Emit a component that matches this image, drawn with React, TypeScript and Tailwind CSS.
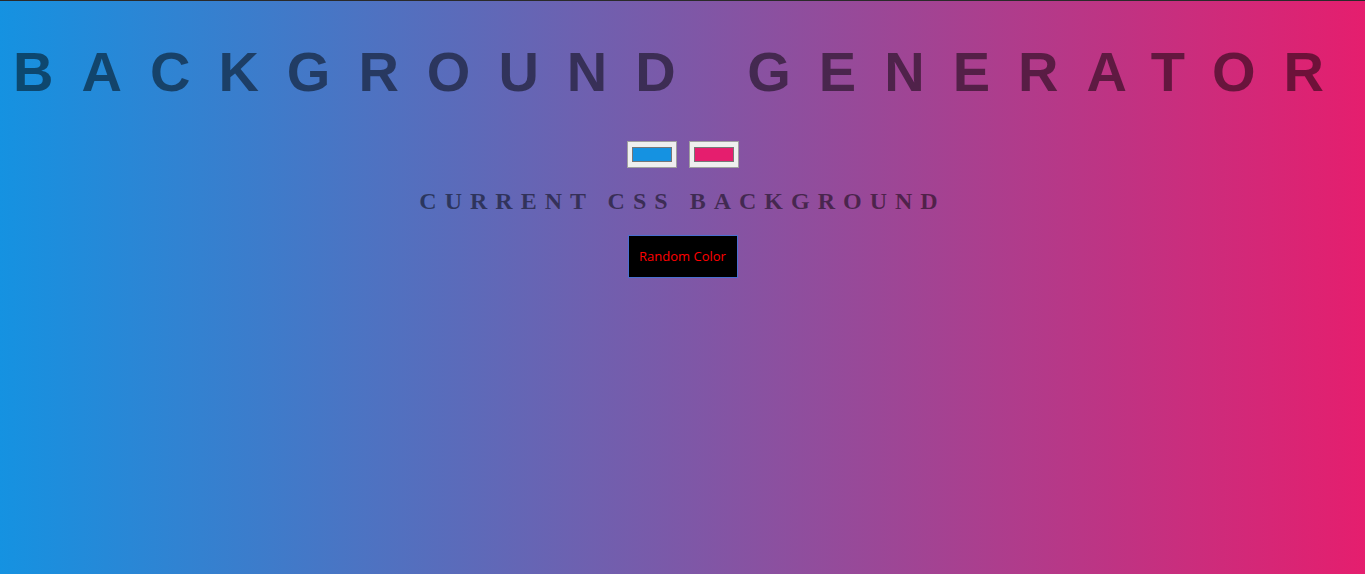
import React from "react";

const Swatch: React.FC<{ color: string }> = ({ color }) => (
  <div className="w-[50px] h-[27px] bg-[#efefef] border border-[#a0a0a0] flex items-center justify-center">
    <div className="w-[40px] h-[15px] border border-[#777777]" style={{ backgroundColor: color }} />
  </div>
);

const App: React.FC = () => {
  const left = "#1592e1";
  const right = "#e51e6e";

  return (
    <div
      className="w-full h-[574px] border-t border-[#2a2a2a] flex flex-col items-center text-center overflow-hidden"
      style={{ background: `linear-gradient(to right, ${left}, ${right})` }}
    >
      {/* title */}
      <h1 className="mt-[39px] text-[56px] leading-[64px] font-bold tracking-[28px] uppercase whitespace-nowrap text-black/50 font-['Liberation_Sans',Arial,sans-serif]">
        Background Generator
      </h1>

      {/* colour pickers */}
      <div className="mt-[37px] flex gap-[12px]">
        <Swatch color={left} />
        <Swatch color={right} />
      </div>

      <h3 className="mt-[19px] text-[24px] leading-[28px] font-bold tracking-[8px] uppercase text-black/50 font-['Liberation_Serif','Times_New_Roman',serif]">
        Current CSS Background
      </h3>

      <button className="mt-[20px] w-[110px] h-[43px] bg-black border border-[#4a6fd0] text-[#ff0000] text-[13px] leading-none font-['Open_Sans',sans-serif]">
        Random Color
      </button>
    </div>
  );
};

export default App;
